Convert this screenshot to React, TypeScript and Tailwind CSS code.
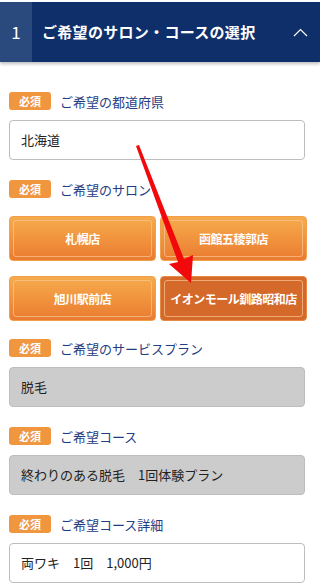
import React from "react";

const font = { fontFamily: '"Noto Sans CJK JP", "Noto Sans", sans-serif' };

const Label = ({ text }: { text: string }) => (
  <div className="flex items-center gap-[9px] h-[18px]">
    <span className="flex items-center justify-center w-[42px] h-[18px] rounded-[3px] bg-[#f0963f] text-white text-[11px] font-bold leading-none">
      必須
    </span>
    <span className="text-[13px] text-[#1f3d82] leading-none">{text}</span>
  </div>
);

const Field = ({ value, gray }: { value: string; gray?: boolean }) => (
  <div
    className={`w-[296px] h-[40px] flex items-center px-[11px] rounded-[4px] border border-[#bdbdbd] text-[13px] text-[#222] ${
      gray ? "bg-[#cccccc]" : "bg-white"
    }`}
  >
    {value}
  </div>
);

const SalonButton = ({ name, active }: { name: string; active?: boolean }) => (
  <div
    className={`h-[45px] rounded-[4px] p-[3px] ${
      active
        ? "bg-[#d5692a] border border-[#e58a44]"
        : "bg-gradient-to-b from-[#f6ab4c] to-[#ea7b30] border border-[#f0a04a]"
    }`}
  >
    <div className="h-full rounded-[3px] border border-[#f8c896]/70 flex items-center justify-center text-white text-[12px] font-bold tracking-[-0.5px]">
      {name}
    </div>
  </div>
);

export default function App() {
  return (
    <div className="relative w-[320px] h-[588px] bg-white overflow-hidden" style={font}>
      <div className="pt-[2px]">
        <div className="flex h-[60px] bg-[#0f2f6a] shadow-[0_2px_3px_rgba(0,0,0,0.25)]">
          <div className="w-[32px] bg-[#2a4a7e] flex items-center justify-center text-white text-[17px]">
            1
          </div>
          <div className="flex-1 flex items-center pl-[10px] text-white text-[15px] font-bold tracking-[0.3px]">
            ご希望のサロン・コースの選択
          </div>
          <div className="w-[40px] flex items-center justify-center">
            <svg width="15" height="9" viewBox="0 0 15 9" fill="none">
              <path d="M1 8 L7.5 1.5 L14 8" stroke="white" strokeWidth="1.2" />
            </svg>
          </div>
        </div>
      </div>

      <div className="px-[9px] pt-[30px] flex flex-col">
        <Label text="ご希望の都道府県" />
        <div className="mt-[10px]">
          <Field value="北海道" />
        </div>

        <div className="mt-[20px]">
          <Label text="ご希望のサロン" />
        </div>
        <div className="mt-[18px] grid grid-cols-2 gap-x-[4px] gap-y-[15px] w-[298px]">
          <SalonButton name="札幌店" />
          <SalonButton name="函館五稜郭店" />
          <SalonButton name="旭川駅前店" />
          <SalonButton name="イオンモール釧路昭和店" active />
        </div>

        <div className="mt-[18px]">
          <Label text="ご希望のサービスプラン" />
        </div>
        <div className="mt-[10px]">
          <Field value="脱毛" gray />
        </div>

        <div className="mt-[20px]">
          <Label text="ご希望コース" />
        </div>
        <div className="mt-[10px]">
          <Field value="終わりのある脱毛　1回体験プラン" gray />
        </div>

        <div className="mt-[20px]">
          <Label text="ご希望コース詳細" />
        </div>
        <div className="mt-[10px]">
          <Field value="両ワキ　1回　1,000円" />
        </div>
      </div>

      <svg
        className="absolute left-0 top-0 pointer-events-none"
        width="320"
        height="588"
        viewBox="0 0 320 588"
      >
        <polygon
          points="136,146 139,145 184,259 193,255 191,283 169,264 178,262"
          fill="#f2090c"
        />
      </svg>
    </div>
  );
}
